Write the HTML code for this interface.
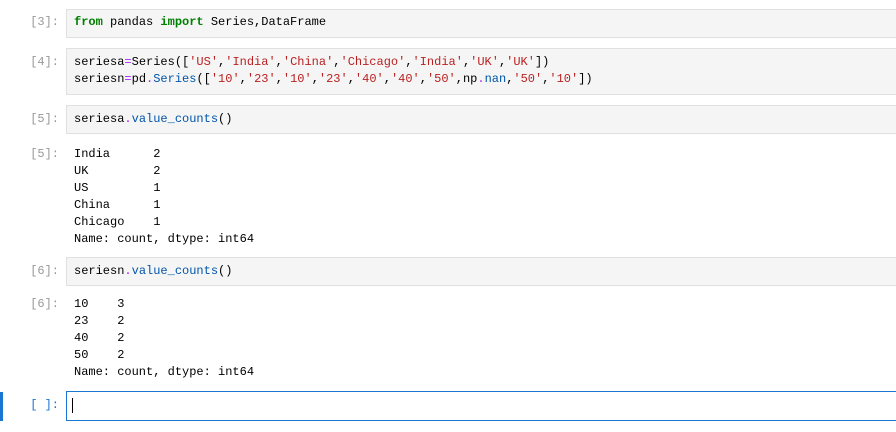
<!DOCTYPE html>
<html><head><style>
body{margin:0;width:896px;height:432px;background:#fff;overflow:hidden;position:relative;font-family:"Liberation Mono",monospace;font-size:12px;}
.p{position:absolute;left:0;width:59px;text-align:right;color:#999;line-height:17px;}
.box{position:absolute;left:66px;width:840px;background:#f5f5f5;border:1px solid #e0e0e0;box-sizing:border-box;}
.t{position:absolute;left:74px;line-height:17px;white-space:pre;color:#000;}
.k{color:#008000;font-weight:bold}.o{color:#aa22ff}.s{color:#ba2121}.b{color:#0055aa}
</style></head><body>
<div class="box" style="top:9px;height:29px"></div>
<div class="p" style="top:14px">[3]:</div>
<div class="t" style="top:14px"><span class="k">from</span> pandas <span class="k">import</span> Series,DataFrame</div>

<div class="box" style="top:48px;height:47px"></div>
<div class="p" style="top:54px">[4]:</div>
<div class="t" style="top:54px">seriesa<span class="o">=</span>Series([<span class="s">'US'</span>,<span class="s">'India'</span>,<span class="s">'China'</span>,<span class="s">'Chicago'</span>,<span class="s">'India'</span>,<span class="s">'UK'</span>,<span class="s">'UK'</span>])
seriesn<span class="o">=</span>pd<span class="o">.</span><span class="b">Series</span>([<span class="s">'10'</span>,<span class="s">'23'</span>,<span class="s">'10'</span>,<span class="s">'23'</span>,<span class="s">'40'</span>,<span class="s">'40'</span>,<span class="s">'50'</span>,np<span class="o">.</span><span class="b">nan</span>,<span class="s">'50'</span>,<span class="s">'10'</span>])</div>

<div class="box" style="top:105px;height:29px"></div>
<div class="p" style="top:111px">[5]:</div>
<div class="t" style="top:111px">seriesa<span class="o">.</span><span class="b">value_counts</span>()</div>

<div class="p" style="top:146px">[5]:</div>
<div class="t" style="top:146px">India      2
UK         2
US         1
China      1
Chicago    1
Name: count, dtype: int64</div>

<div class="box" style="top:257px;height:29px"></div>
<div class="p" style="top:263px">[6]:</div>
<div class="t" style="top:263px">seriesn<span class="o">.</span><span class="b">value_counts</span>()</div>

<div class="p" style="top:296px">[6]:</div>
<div class="t" style="top:296px">10    3
23    2
40    2
50    2
Name: count, dtype: int64</div>

<div style="position:absolute;left:0;top:392px;width:3px;height:29px;background:#1976d2"></div>
<div class="box" style="top:391px;height:30px;background:#fff;border-color:#1976d2"></div>
<div class="p" style="top:397px;color:#1976d2">[ ]:</div>
<div style="position:absolute;left:72px;top:398px;width:1px;height:15px;background:#000"></div>
</body></html>
